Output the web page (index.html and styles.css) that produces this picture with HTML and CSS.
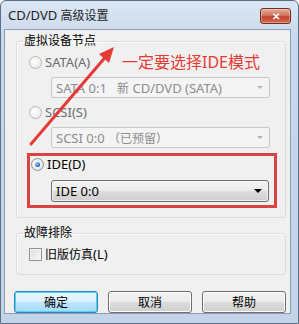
FILE: index.html
```
<!DOCTYPE html>
<html lang="zh-CN">
<head>
    <meta charset="UTF-8">
    <title>CD/DVD 高级设置</title>
    <link rel="stylesheet" href="styles.css">
</head>
<body>
    <div class="window">
        <div class="titlebar">
            <span class="title">CD/DVD <span class="zh">高级设置</span></span>
            <span class="close">&#x2715;</span>
        </div>
        <div class="client">
            <fieldset class="group group-node">
                <legend>虚拟设备节点</legend>
                <div class="option disabled">
                    <span class="radio"></span>
                    <span>SATA(A)</span>
                </div>
                <div class="combo disabled">
                    <span>SATA 0:1&nbsp;&nbsp;&nbsp;<span class="zh">新</span> CD/DVD (SATA)</span>
                    <span class="arrow"></span>
                </div>
                <div class="option disabled">
                    <span class="radio"></span>
                    <span>SCSI(S)</span>
                </div>
                <div class="combo disabled">
                    <span>SCSI 0:0 <span class="zh">（已预留）</span></span>
                    <span class="arrow"></span>
                </div>
                <div class="highlight">
                    <div class="option">
                        <span class="radio checked"></span>
                        <span>IDE(D)</span>
                    </div>
                    <div class="combo active">
                        <span>IDE 0:0</span>
                        <span class="arrow"></span>
                    </div>
                </div>
            </fieldset>
            <fieldset class="group group-trouble">
                <legend>故障排除</legend>
                <div class="option">
                    <span class="checkbox"></span>
                    <span><span class="zh">旧版仿真</span>(L)</span>
                </div>
            </fieldset>
            <div class="buttons">
                <button class="focused">确定</button>
                <button>取消</button>
                <button>帮助</button>
            </div>
        </div>
        <!-- annotation drawn on top of the screenshot -->
        <svg class="note-arrow" width="299" height="324" viewBox="0 0 299 324">
            <line x1="31" y1="144" x2="104" y2="58.7" stroke="#e53b34" stroke-width="3" stroke-linecap="round"/>
            <polygon points="114,47 109,63 99,54" fill="#e53b34"/>
        </svg>
        <div class="note-text">一定要选择IDE模式</div>
    </div>
</body>
</html>
```

FILE: styles.css
```
body {
    margin: 0;
    font-family: "Noto Sans", "Noto Sans CJK SC", sans-serif;
    font-size: 13px;
    color: #000;
    background: #fff;
}
.zh {
    font-size: 12px;
}
.window {
    position: relative;
    box-sizing: border-box;
    width: 299px;
    height: 324px;
    padding: 0 7px 9px 3px;
    border: 1px solid #5d6f86;
    border-radius: 6px 6px 0 0;
    background: linear-gradient(#dbe6f3, #c7d8ec 40px, #c3d4e9);
    display: flex;
    flex-direction: column;
}
.titlebar {
    height: 29px;
    display: flex;
    align-items: center;
    justify-content: space-between;
    padding-left: 4px;
}
.title {
    line-height: 14px;
    margin-top: 1px;
    color: #1e1e1e;
}
.close {
    width: 31px;
    height: 16px;
    margin-top: 2px;
    box-sizing: border-box;
    border: 1px solid #6e2d24;
    border-radius: 3px;
    background: linear-gradient(#e8a999, #d2765f 45%, #c2432c 55%, #d36a4f);
    color: #fff;
    font-size: 10px;
    font-weight: bold;
    line-height: 14px;
    text-align: center;
    box-shadow: inset 0 0 0 1px rgba(255, 255, 255, 0.35);
}
.client {
    flex: 1;
    border: 1px solid #8a9cb3;
    background: #f0f0f0;
    padding: 4px 4px 0 11px;
    display: flex;
    flex-direction: column;
}
.group {
    margin: 0;
    padding: 0;
    border: 1px solid #d5dfe5;
    border-radius: 3px;
    box-shadow: inset 1px 1px 0 #fff;
}
.group legend {
    margin-left: 6px;
    padding: 0 1px;
    font-size: 12px;
    line-height: 14px;
}
.group-node {
    padding-bottom: 9px;
}
.group-trouble {
    margin-top: 8px;
    padding-bottom: 12px;
}
.option {
    display: flex;
    align-items: center;
    gap: 3px;
    height: 16px;
    line-height: 16px;
    margin: 6px 0 0 12px;
}
.option.disabled {
    color: #6d6d6d;
}
.radio {
    width: 11px;
    height: 11px;
    border: 1px solid #8f9193;
    border-radius: 50%;
    background: radial-gradient(circle at 40% 40%, #ffffff, #dcdcdc);
    display: flex;
    align-items: center;
    justify-content: center;
}
.disabled .radio {
    border-color: #b6b8ba;
    background: radial-gradient(circle at 40% 40%, #ffffff, #e6e6e6);
}
.radio.checked::after {
    content: "";
    width: 5px;
    height: 5px;
    border-radius: 50%;
    background: radial-gradient(circle at 35% 35%, #9fd3ff, #2a73c2 60%, #163f73);
}
.checkbox {
    width: 11px;
    height: 11px;
    border: 1px solid #8f9193;
    background: linear-gradient(135deg, #dcdcdc, #f8f8f8);
    box-shadow: inset 0 0 0 1px #f4f4f4;
}
.combo {
    box-sizing: border-box;
    height: 21px;
    margin: 7px 15px 0 34px;
    padding: 0 6px 0 4px;
    border: 1px solid #c8c8c8;
    border-radius: 2px;
    display: flex;
    align-items: center;
    justify-content: space-between;
    background: #f4f4f4;
    white-space: nowrap;
}
.combo.disabled {
    color: #8d8d8d;
}
.combo .arrow {
    width: 0;
    height: 0;
    border-left: 3px solid transparent;
    border-right: 3px solid transparent;
    border-top: 3px solid #b5b5b5;
}
.combo.active {
    height: 22px;
    margin: 8px 5px 0 21px;
    border: 1px solid #707070;
    border-radius: 3px;
    background: linear-gradient(#f4f4f4, #ebebeb 50%, #dddddd 51%, #cfcfcf);
    box-shadow: inset 0 0 0 1px rgba(255, 255, 255, 0.6);
}
.combo.active .arrow {
    border-left-width: 4px;
    border-right-width: 4px;
    border-top: 4px solid #000;
}
.highlight {
    margin: 5px 8px 0 10px;
    border: 3px solid #d94342;
    padding-bottom: 3px;
}
.highlight .option {
    margin: 0 0 0 1px;
}
.buttons {
    display: flex;
    gap: 10px;
    margin: 16px 0 0 -2px;
}
.buttons button {
    width: 84px;
    height: 22px;
    padding: 0;
    font-family: inherit;
    font-size: 12px;
    color: #000;
    border: 1px solid #707070;
    border-radius: 3px;
    background: linear-gradient(#f2f2f2, #ebebeb 50%, #dddddd 51%, #cfcfcf);
    box-shadow: inset 0 0 0 1px #fcfcfc;
}
.buttons button.focused {
    border-color: #3c7fb1;
    background: linear-gradient(#eaf6fd, #d9f0fc 50%, #bee6fd 51%, #a7d9f5);
    box-shadow: inset 0 0 0 1px #48d5fe;
}
.note-arrow {
    position: absolute;
    left: -1px;
    top: -1px;
    pointer-events: none;
}
.note-text {
    position: absolute;
    left: 121px;
    top: 51px;
    font-size: 16px;
    line-height: 20px;
    color: #e53b34;
    white-space: nowrap;
}
```
